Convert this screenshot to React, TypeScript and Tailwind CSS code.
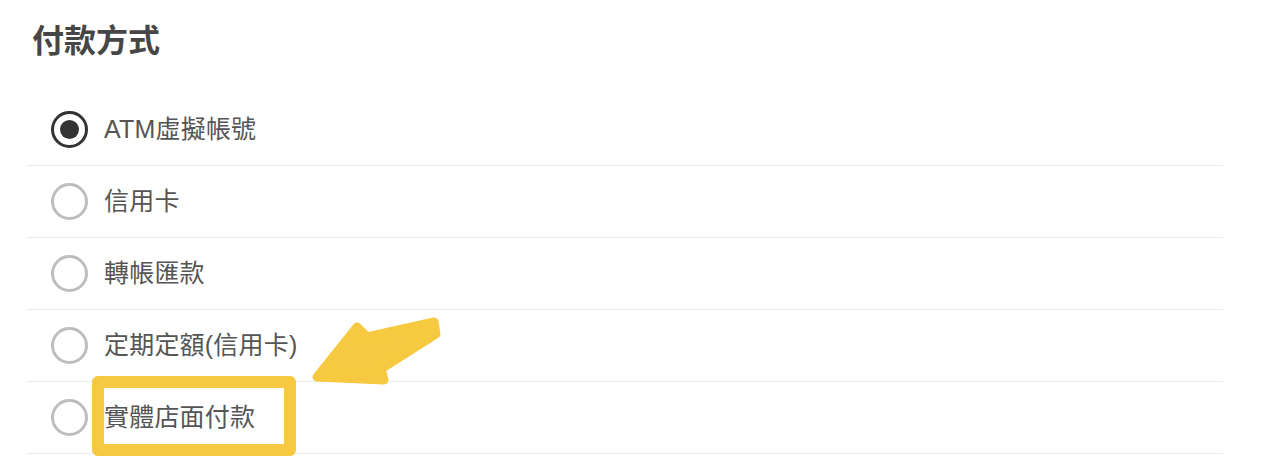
import { FC } from "react";

const options = ["ATM虛擬帳號", "信用卡", "轉帳匯款", "定期定額(信用卡)", "實體店面付款"];

const Radio: FC<{ checked: boolean }> = ({ checked }) =>
  checked ? (
    <div className="flex h-[37px] w-[37px] shrink-0 items-center justify-center rounded-full border-[3px] border-[#333333]">
      <div className="h-[19px] w-[19px] rounded-full bg-[#333333]" />
    </div>
  ) : (
    <div className="h-[37px] w-[37px] shrink-0 rounded-full border-[3px] border-[#bdbdbd]" />
  );

const App: FC = () => {
  return (
    <div
      className="relative h-[456px] w-[1284px] overflow-hidden bg-white"
      style={{ fontFamily: '"Liberation Sans", "Noto Sans CJK TC", sans-serif' }}
    >
      <div className="w-[1196px] ml-[27px]">
        <h1 className="ml-[5px] pt-[17px] text-[32px] leading-[48px] font-semibold text-[#464646]">
          付款方式
        </h1>
        <div className="mt-[29px]">
          {options.map((label, i) => (
            <div
              key={label}
              className="relative flex h-[72px] items-center border-b border-[#ebebeb] pl-[24px]"
            >
              <Radio checked={i === 0} />
              <span className="ml-[16px] text-[25px] tracking-[0.2px] text-[#555555]">{label}</span>
              {i === options.length - 1 && (
                <div className="absolute left-[65px] top-[-6px] h-[80px] w-[204px] rounded-[6px] border-[12px] border-[#f7c940]" />
              )}
            </div>
          ))}
        </div>
      </div>

      {/* annotation arrow */}
      <svg className="absolute left-0 top-0" width="1284" height="456">
        <polygon
          points="317,377 357,327 367,337 434,322 436,334 381,369 384,380"
          fill="#f7c940"
          stroke="#f7c940"
          strokeWidth="9"
          strokeLinejoin="round"
        />
      </svg>
    </div>
  );
};

export default App;
